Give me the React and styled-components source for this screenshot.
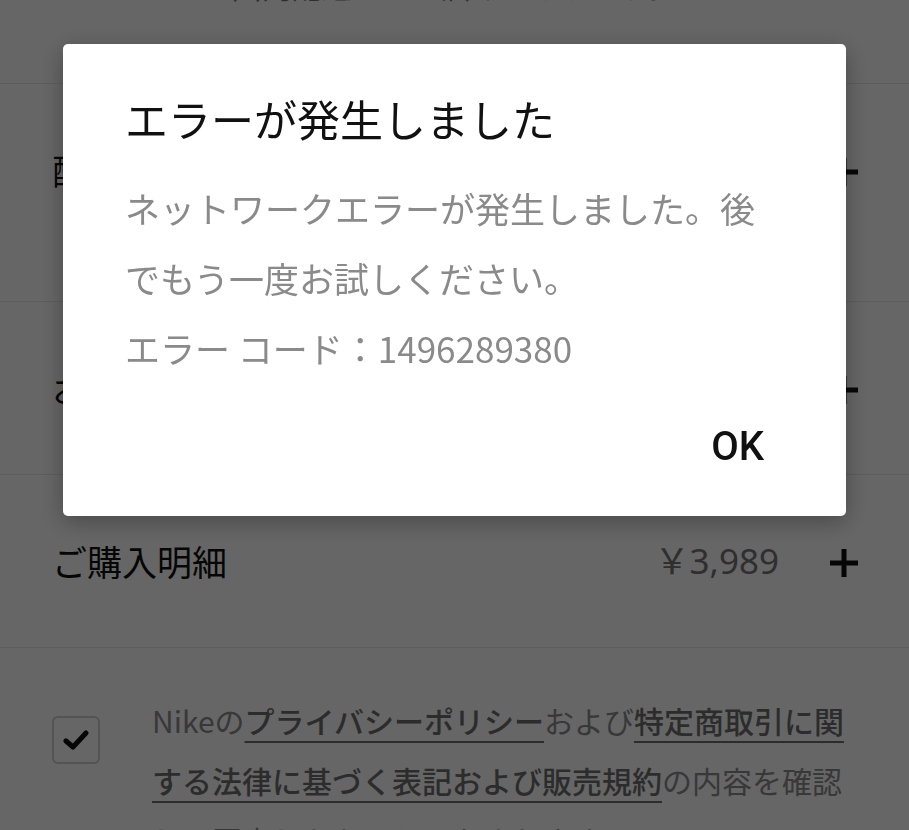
import React from "react";
import styled, { createGlobalStyle } from "styled-components";

const GlobalStyle = createGlobalStyle`
    html, body {
        margin: 0;
        padding: 0;
        background: #ffffff;
        overflow: hidden;
    }
    body {
        font-family: "Noto Sans CJK JP", "Noto Sans", sans-serif;
        -webkit-font-smoothing: antialiased;
    }
`;

const Page = styled.div`
    width: 909px;
    height: 830px;
    overflow: hidden;
    background: #ffffff;
`;

const TopNote = styled.div`
    height: 84px;
    border-bottom: 1px solid #e8e8e8;
    box-sizing: border-box;
    overflow: hidden;
`;

const TopNoteText = styled.p`
    margin: -37px 0 0;
    text-align: center;
    font-size: 30px;
    line-height: 44px;
    color: #757575;
`;

const Row = styled.div`
    display: flex;
    align-items: flex-start;
    height: ${(p) => p.$height}px;
    padding: 64px 51px 0 52px;
    box-sizing: border-box;
    border-bottom: 1px solid #e8e8e8;
`;

const RowLabel = styled.span`
    flex: 1;
    font-size: 35px;
    line-height: 44px;
    color: #111111;
`;

const RowPrice = styled.span`
    font-size: 35px;
    line-height: 44px;
    color: #757575;
    font-family: "Noto Sans", "Noto Sans CJK JP", sans-serif;
`;

const PlusIcon = styled.svg`
    width: 28px;
    height: 28px;
    margin: 10px 0 0 51px;
    flex-shrink: 0;
`;

const Consent = styled.div`
    display: flex;
    gap: 52px;
    padding: 42px 61px 0 52px;
`;

const CheckBox = styled.div`
    flex-shrink: 0;
    width: 48px;
    height: 48px;
    margin-top: 26px;
    box-sizing: border-box;
    border: 2px solid #cfcfcf;
    border-radius: 6px;
    display: flex;
    align-items: center;
    justify-content: center;
`;

const ConsentText = styled.p`
    margin: 0;
    font-size: 30px;
    line-height: 60px;
    color: #8d8d8d;
`;

const Link = styled.a`
    color: #6f6f6f;
    font-weight: 500;
    text-decoration: underline;
    text-decoration-thickness: 2px;
    text-underline-offset: 8px;
`;

const Overlay = styled.div`
    position: fixed;
    inset: 0;
    background: rgba(0, 0, 0, 0.6);
    display: flex;
    justify-content: center;
    align-items: flex-start;
    padding-top: 44px;
`;

const Dialog = styled.div`
    width: 783px;
    height: 472px;
    box-sizing: border-box;
    background: #ffffff;
    border-radius: 5px;
    box-shadow: 0 6px 24px rgba(0, 0, 0, 0.3);
    padding: 44px 62px 0 62px;
    display: flex;
    flex-direction: column;
`;

const DialogTitle = styled.h2`
    margin: 0;
    font-size: 43px;
    line-height: 60px;
    font-weight: 400;
    color: #111111;
`;

const DialogText = styled.p`
    margin: ${(p) => (p.$first ? "25px" : "0")} 0 0;
    font-size: 35px;
    line-height: 70px;
    color: #8a8a8a;
`;

const Actions = styled.div`
    display: flex;
    justify-content: flex-end;
    margin-top: 34px;
`;

const OkButton = styled.button`
    border: none;
    background: none;
    padding: 12px 20px;
    font-family: "Roboto", "Noto Sans", sans-serif;
    font-size: 40px;
    line-height: 36px;
    font-weight: 500;
    color: #111111;
    cursor: pointer;
`;

function Plus() {
    return (
        <PlusIcon viewBox="0 0 28 28">
            <rect x="11.5" y="0" width="5" height="28" fill="#111" />
            <rect x="0" y="11.5" width="28" height="5" fill="#111" />
        </PlusIcon>
    );
}

const rows = [
    { label: "配送方法", height: 218 },
    { label: "お支払い方法", height: 173 },
    { label: "ご購入明細", price: "￥3,989", height: 173 },
];

export default function App() {
    return (
        <>
            <GlobalStyle />
            <Page>
                <TopNote>
                    <TopNoteText>国内配送でのお届けとなります。</TopNoteText>
                </TopNote>
                {rows.map((row) => (
                    <Row key={row.label} $height={row.height}>
                        <RowLabel>{row.label}</RowLabel>
                        {row.price && <RowPrice>{row.price}</RowPrice>}
                        <Plus />
                    </Row>
                ))}
                <Consent>
                    <CheckBox>
                        <svg width="26" height="22" viewBox="0 0 26 22">
                            <path d="M3 12 L10 18 L23 4" fill="none" stroke="#111" strokeWidth="5" strokeLinecap="round" strokeLinejoin="round" />
                        </svg>
                    </CheckBox>
                    <ConsentText>
                        Nikeの<Link>プライバシーポリシー</Link>および<Link>特定商取引に関する法律に基づく表記および販売規約</Link>の内容を確認し、同意したものとみなされます。
                    </ConsentText>
                </Consent>
            </Page>
            <Overlay>
                <Dialog>
                    <DialogTitle>エラーが発生しました</DialogTitle>
                    <DialogText $first>ネットワークエラーが発生しました。後でもう一度お試しください。</DialogText>
                    <DialogText>エラー コード：1496289380</DialogText>
                    <Actions>
                        <OkButton>OK</OkButton>
                    </Actions>
                </Dialog>
            </Overlay>
        </>
    );
}
